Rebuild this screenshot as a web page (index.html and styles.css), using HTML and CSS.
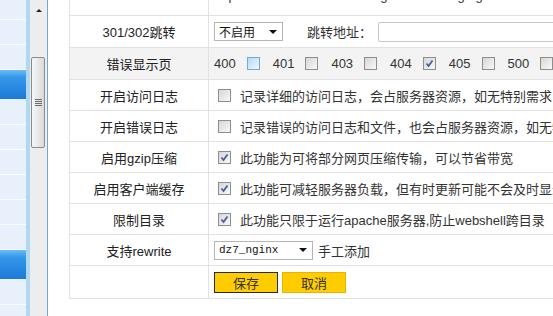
FILE: index.html
```html
<!DOCTYPE html>
<html>
	<head>
		<meta charset="UTF-8">
		<title>站点设置</title>
		<link rel="stylesheet" href="styles.css">
	</head>
	<body>
		<div class="frame">
			<div class="side">
				<div class="nav-item top"></div>
				<div class="nav-item"></div>
				<div class="nav-item"></div>
				<div class="nav-item on"></div>
				<div class="nav-item after"></div>
				<div class="nav-item"></div>
				<div class="nav-item"></div>
				<div class="nav-item"></div>
				<div class="nav-item"></div>
				<div class="nav-item"></div>
				<div class="nav-item on"></div>
				<div class="nav-item after"></div>
			</div>
			<div class="side-edge"></div>
			<div class="scroll">
				<div class="scroll-up"></div>
				<div class="thumb">
					<span class="grip"></span>
					<span class="grip"></span>
					<span class="grip"></span>
					<span class="grip"></span>
				</div>
			</div>
			<div class="main">
				<table class="form">
					<tr class="first">
						<td class="label"></td>
						<td class="value"><div class="cell">http://www.dimaxren/bbs/images/default/logo.gif</div></td>
					</tr>
					<tr class="tall">
						<td class="label">301/302跳转</td>
						<td class="value">
							<div class="cell">
								<span class="select short">不启用</span>
								<span class="addr">跳转地址：</span>
								<span class="text-input"></span>
							</div>
						</td>
					</tr>
					<tr class="gray tall">
						<td class="label">错误显示页</td>
						<td class="value">
							<div class="cell codes">
								<span class="code">400<span class="cb hover"></span></span>
								<span class="code">401<span class="cb"></span></span>
								<span class="code">403<span class="cb"></span></span>
								<span class="code">404<span class="cb"><svg viewBox="0 0 11 11"><path d="M2.5 5.5 L4.5 8 L8.5 2.5"/></svg></span></span>
								<span class="code">405<span class="cb"></span></span>
								<span class="code">500<span class="cb"></span></span>
							</div>
						</td>
					</tr>
					<tr>
						<td class="label">开启访问日志</td>
						<td class="value"><div class="cell check"><span class="cb"></span>记录详细的访问日志，会占服务器资源，如无特别需求，请不要开启</div></td>
					</tr>
					<tr>
						<td class="label">开启错误日志</td>
						<td class="value"><div class="cell check"><span class="cb"></span>记录错误的访问日志和文件，也会占服务器资源，如无特别需求</div></td>
					</tr>
					<tr>
						<td class="label">启用gzip压缩</td>
						<td class="value"><div class="cell check"><span class="cb"><svg viewBox="0 0 11 11"><path d="M2.5 5.5 L4.5 8 L8.5 2.5"/></svg></span>此功能为可将部分网页压缩传输，可以节省带宽</div></td>
					</tr>
					<tr>
						<td class="label">启用客户端缓存</td>
						<td class="value"><div class="cell check"><span class="cb"><svg viewBox="0 0 11 11"><path d="M2.5 5.5 L4.5 8 L8.5 2.5"/></svg></span>此功能可减轻服务器负载，但有时更新可能不会及时显示</div></td>
					</tr>
					<tr>
						<td class="label">限制目录</td>
						<td class="value"><div class="cell check"><span class="cb"><svg viewBox="0 0 11 11"><path d="M2.5 5.5 L4.5 8 L8.5 2.5"/></svg></span>此功能只限于运行apache服务器,防止webshell跨目录</div></td>
					</tr>
					<tr>
						<td class="label">支持rewrite</td>
						<td class="value">
							<div class="cell">
								<span class="select long">dz7_nginx</span>
								<span class="manual">手工添加</span>
							</div>
						</td>
					</tr>
					<tr class="last">
						<td class="label"></td>
						<td class="value">
							<div class="cell buttons">
								<button class="btn default">保存</button>
								<button class="btn">取消</button>
							</div>
						</td>
					</tr>
				</table>
			</div>
		</div>
	</body>
</html>
```

FILE: styles.css
```css
* {
	margin: 0;
	padding: 0;
	box-sizing: border-box;
}
body {
	width: 553px;
	height: 316px;
	overflow: hidden;
	background: #fff;
	color: #333;
	font: 13px "Liberation Sans", "Noto Sans CJK SC", sans-serif;
}
.frame {
	display: flex;
	height: 316px;
}
/* 左侧菜单 */
.side {
	width: 26px;
	background: #e8f1fb;
}
.nav-item {
	height: 25px;
	border-bottom: 1px solid #fafcff;
}
.nav-item.top {
	height: 20px;
}
.nav-item.on {
	height: 29px;
	border: none;
	background: linear-gradient(#6cbdf7, #3597ea 25%, #1d79d6);
}
.nav-item.after {
	height: 26px;
}
.side-edge {
	width: 4px;
	background: #afd8f3;
}
/* 滚动条 */
.scroll {
	width: 17px;
	padding-left: 1px;
	background: #ededed;
}
.scroll-up {
	height: 57px;
	display: flex;
	justify-content: center;
	padding-top: 9px;
}
.scroll-up::before {
	content: "";
	width: 0;
	height: 0;
	border-left: 3px solid transparent;
	border-right: 3px solid transparent;
	border-bottom: 3px solid #222;
}
.thumb {
	width: 14px;
	height: 91px;
	border: 1px solid #8c8c8c;
	border-radius: 2px;
	background: linear-gradient(to right, #f6f6f6, #dadada);
	display: flex;
	flex-direction: column;
	align-items: center;
	justify-content: center;
	gap: 1px;
}
.grip {
	width: 7px;
	height: 1px;
	background: #6a6a6a;
}
/* 主体表单 */
.main {
	flex: 1;
	overflow: hidden;
	border-left: 1px solid #73a7cb;
	padding-left: 21px;
}
.form {
	width: 720px;
	border-collapse: collapse;
	margin-top: -16px;
}
.form td {
	border: 1px solid #e2e2e2;
	height: 31px;
}
.form tr.tall td {
	height: 32px;
}
.form tr.last td {
	height: 33px;
}
.form tr.first td {
	vertical-align: top;
	padding-top: 3px;
}
.form .label {
	width: 139px;
	text-align: center;
	color: #222;
}
.form .value {
	padding-left: 5px;
}
.form tr.gray td {
	background: #f3f3f3;
}
.cell {
	display: flex;
	align-items: center;
	white-space: nowrap;
}
.select {
	display: flex;
	align-items: center;
	height: 19px;
	border: 1px solid #b5b5b5;
	background: #fff;
	padding-left: 4px;
	font-size: 12px;
	color: #111;
}
.select::after {
	content: "";
	margin-left: auto;
	margin-right: 5px;
	border-left: 4px solid transparent;
	border-right: 4px solid transparent;
	border-top: 4px solid #111;
}
.select.short {
	width: 69px;
}
.select.long {
	width: 99px;
	font: 11px "Liberation Mono", monospace;
}
.addr {
	margin-left: 24px;
}
.text-input {
	width: 200px;
	height: 20px;
	margin-left: 6px;
	border: 1px solid #c6c6c6;
	border-radius: 2px;
	background: #fff;
}
.codes {
	gap: 13px;
}
.code {
	display: flex;
	align-items: center;
	gap: 11px;
}
.cb {
	display: inline-block;
	width: 13px;
	height: 13px;
	flex: none;
	border: 1px solid #8e8e8e;
	background: linear-gradient(135deg, #d6d6d6, #f9f9f9);
}
.cb.hover {
	border-color: #77a9d6;
	background: linear-gradient(135deg, #b6daf4, #eef8ff);
}
.cb svg {
	display: block;
	width: 11px;
	height: 11px;
}
.cb path {
	fill: none;
	stroke: #4b5f9c;
	stroke-width: 1.8;
}
.check {
	gap: 9px;
	padding-left: 4px;
}
.manual {
	margin-left: 5px;
}
.buttons {
	gap: 4px;
}
.btn {
	width: 64px;
	height: 21px;
	background: #ffcc00;
	border: 1px solid #e9b400;
	color: #333;
	font: 13px "Liberation Sans", "Noto Sans CJK SC", sans-serif;
}
.btn.default {
	border-color: #2b2b2b;
}
```
